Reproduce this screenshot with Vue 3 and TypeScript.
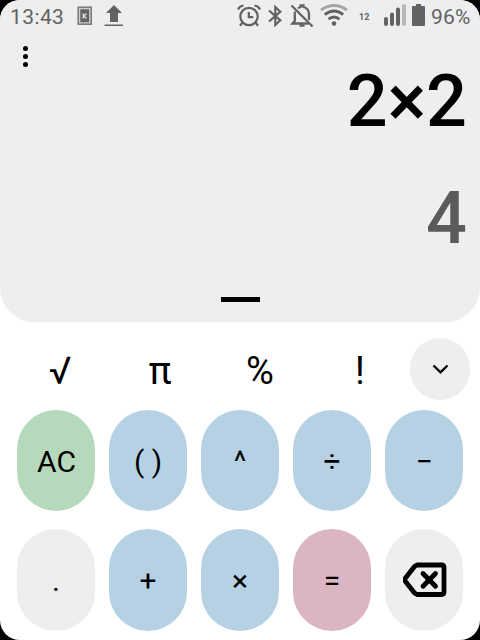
<script setup lang="ts">
interface Key {
  label: string
  tone: 'clear' | 'operator' | 'equals' | 'plain'
  name: string
}

const functions: string[] = ['√', 'π', '%', '!']

const keys: Key[] = [
  { label: 'AC', tone: 'clear', name: 'ac' },
  { label: '( )', tone: 'operator', name: 'parens' },
  { label: '^', tone: 'operator', name: 'power' },
  { label: '÷', tone: 'operator', name: 'divide' },
  { label: '−', tone: 'operator', name: 'minus' },
  { label: '.', tone: 'plain', name: 'point' },
  { label: '+', tone: 'operator', name: 'plus' },
  { label: '×', tone: 'operator', name: 'times' },
  { label: '=', tone: 'equals', name: 'equals' },
  { label: '', tone: 'plain', name: 'backspace' },
]
</script>

<template>
  <div class="device">
    <main class="screen">
      <section class="display">
        <header class="status">
          <span class="clock">13:43</span>
          <svg class="sim" width="16" height="20" viewBox="0 0 16 20">
            <rect x="1.200" y="1.200" width="13" height="17" fill="#d0d0d0" stroke="#777" stroke-width="1.500" />
            <rect x="3.300" y="3.300" width="8.800" height="13" fill="#626262" />
            <path d="M6.300 7.500v5M9.500 7.500 7 10l2.500 2.500" fill="none" stroke="#e4e4e4" stroke-width="1.300" />
          </svg>
          <svg class="upload" width="20" height="22" viewBox="0 0 20 22">
            <path d="M10 0 18 8h-4v9H6V8H2Z" fill="#626262" />
            <path d="M.5 20.200h18.500" stroke="#626262" stroke-width="1.600" />
          </svg>
          <svg class="alarm" width="24" height="24" viewBox="0 0 24 24" fill="none" stroke="#626262">
            <circle cx="12" cy="12.500" r="8.700" stroke-width="2.200" />
            <path d="M11.800 8v5.200h4.400" stroke-width="2.200" />
            <path d="M1 5.500Q2.500 2 6.500 1.500M23 5.500Q21.500 2 17.500 1.500M5.500 18.500 3 21.700M18.500 18.500 21 21.700" stroke-width="2.200" />
          </svg>
          <svg class="bluetooth" width="14" height="24" viewBox="0 0 14 24" fill="none" stroke="#626262" stroke-width="2.200">
            <path d="M1 6.500 12.300 16.300 7.300 21V3l5 4.700L1 17.500" />
          </svg>
          <svg class="muted" width="24" height="24" viewBox="0 0 24 24" fill="none" stroke="#626262" stroke-width="2.300">
            <path d="M8 4.500Q9 3.500 10.500 3V1.500h3V3Q19 4.500 19 10.500V16M4.800 7.500V17L2.500 19.500H18.500" />
            <path d="M1.500 1.500 22.500 22.500" />
            <path d="M9.500 21.500h5" stroke-width="2.400" />
          </svg>
          <svg class="wifi" width="28" height="24" viewBox="0 0 28 24" fill="none" stroke="#626262" stroke-width="2.900">
            <path d="M1 6Q14-3 27 6" stroke="#a4a4a4" />
            <path d="M4.800 10.700Q14 3.500 23.200 10.700M8.500 15.200Q14 10.700 19.500 15.200" />
            <circle cx="14" cy="19.500" r="2.300" fill="#626262" stroke="none" />
          </svg>
          <span class="rate">12</span>
          <svg class="signal" width="22" height="22" viewBox="0 0 22 22" stroke="#626262" stroke-width="4" stroke-linecap="round">
            <path d="M2 15v5M8 10.500v9.500M14 5.500v14.500" />
            <path d="M20 2v18" stroke="#b7b7b7" />
          </svg>
          <svg class="battery" width="13" height="22" viewBox="0 0 13 22">
            <path d="M4 0h5v2h3q1 0 1 1v18q0 1-1 1H1q-1 0-1-1V3q0-1 1-1h3Z" fill="#626262" />
          </svg>
          <span class="percent">96%</span>
        </header>
        <button class="menu" aria-label="Menu"><i /><i /><i /></button>
        <div class="expression">2×2</div>
        <div class="result">4</div>
        <div class="handle" />
      </section>

      <section class="functions">
        <button v-for="fn in functions" :key="fn" class="function">{{ fn }}</button>
        <button class="expand" aria-label="Expand">
          <svg width="18" height="12" viewBox="0 0 18 12">
            <path d="M2.500 2.500 9.500 9.300 16.500 2.500" fill="none" stroke="#000" stroke-width="2.400" />
          </svg>
        </button>
      </section>

      <section class="keypad">
        <button v-for="key in keys" :key="key.name" class="key" :class="[key.tone, key.name]">
          <svg v-if="key.name === 'backspace'" width="44" height="36" viewBox="0 0 44 36">
            <path d="M14 3H38.500Q41 3 41 5.500V30Q41 32.500 38.500 32.500H14L11.500 31 2.300 19.200Q1.300 17.700 2.300 16.200L11.500 4.500Z" fill="none" stroke="#000" stroke-width="4.800" stroke-linejoin="round" />
            <path d="M20 11.500 32.500 24.300M32.500 11.500 20 24.300" stroke="#000" stroke-width="4.800" stroke-linecap="round" />
          </svg>
          <span v-else>{{ key.label }}</span>
        </button>
      </section>
    </main>
  </div>
</template>

<style>
body {
  margin: 0;
}
</style>

<style scoped>
.device {
  width: 480px;
  height: 640px;
  overflow: hidden;
  background: #000;
  font-family: Roboto, "Liberation Sans", sans-serif;
}
.screen {
  height: 640px;
  overflow: hidden;
  border-radius: 20px;
  background: #fff;
}
button {
  display: flex;
  align-items: center;
  justify-content: center;
  margin: 0;
  padding: 0;
  border: 0;
  background: none;
  color: #000;
  font: inherit;
}
svg {
  display: block;
  flex: none;
}
.display {
  box-sizing: border-box;
  display: flex;
  flex-direction: column;
  height: 322px;
  border-radius: 0 0 34px 34px;
  background: #eee;
}
.status {
  display: flex;
  align-items: flex-start;
  height: 32px;
  padding: 4px 0 0 10px;
  box-sizing: border-box;
  color: #626262;
  font-size: 21px;
  line-height: 26px;
}
.clock {
  width: 67px;
  letter-spacing: 0.4px;
}
.sim {
  margin-top: 2px;
}
.upload {
  margin: 1px 0 0 11px;
}
.alarm {
  margin-left: 113px;
}
.bluetooth {
  margin-left: 7px;
}
.muted {
  margin-left: 8px;
}
.wifi {
  margin-left: 6px;
}
.rate {
  width: 25px;
  margin-left: 11px;
  font-size: 9px;
  font-weight: 700;
}
.battery {
  margin-left: 6px;
}
.percent {
  margin-left: 6px;
  letter-spacing: 0.2px;
}
.menu {
  flex-direction: column;
  gap: 3px;
  width: 16px;
  height: 24px;
  margin: 12px 0 0 17px;
}
.menu i {
  width: 5px;
  height: 5px;
  border-radius: 50%;
  background: #000;
}
.expression,
.result {
  padding-right: 13px;
  font-size: 72px;
  font-weight: 500;
  line-height: 84px;
  text-align: right;
}
.expression {
  margin-top: -8px;
}
.result {
  margin-top: 33px;
  color: #5b5b5b;
}
.handle {
  width: 39px;
  height: 5px;
  margin: 36px 0 0 221px;
  background: #000;
}
.functions {
  display: flex;
  height: 62px;
  padding: 16px 10px 0;
}
.function {
  width: 100px;
  padding-top: 3px;
  font-size: 38px;
}
.expand {
  width: 60px;
  height: 62px;
  border-radius: 30px;
  background: #eee;
}
.keypad {
  display: grid;
  grid-template-columns: repeat(5, 78px);
  grid-template-rows: 101px 102px;
  gap: 18px 14px;
  padding: 10px 17px 0;
}
.key {
  padding-top: 2px;
  border-radius: 39px;
  font-size: 30px;
}
.key:nth-child(n + 6) {
  padding-top: 0;
}
.clear {
  padding-left: 1px;
  background: #b7d9bb;
}
.operator {
  background: #b5d1e3;
}
.equals {
  background: #dcb5c4;
}
.plain {
  background: #eee;
}
.backspace {
  padding-left: 2px;
}
</style>
